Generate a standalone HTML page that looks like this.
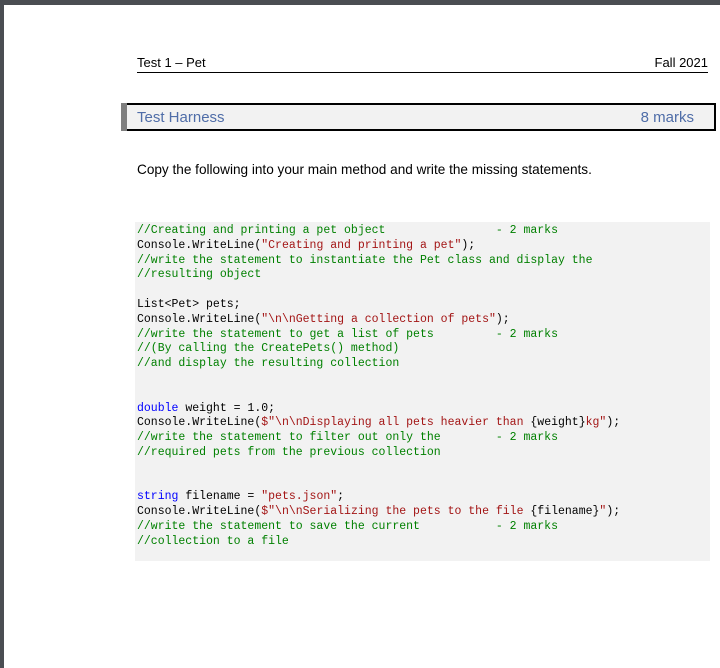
<!DOCTYPE html>
<html><head><meta charset="utf-8"><style>
body{margin:0;width:720px;height:668px;background:#fff;position:relative;overflow:hidden;font-family:"Liberation Sans",sans-serif;}
.tb{position:absolute;left:0;top:0;width:720px;height:5px;background:#4a4d52}
.lb{position:absolute;left:0;top:0;width:4px;height:668px;background:#4a4d52}
.hdr{position:absolute;left:137px;top:55px;width:571px;height:17px;border-bottom:1px solid #000;font-size:13px;color:#000}
.hdr span{position:absolute;top:0}
.box{position:absolute;left:121px;top:103px;width:593px;height:24px;border:2px solid #000;border-left:none;background:#f2f2f2}
.box .g{position:absolute;left:0;top:-2px;width:6px;height:28px;background:#7f7f7f}
.box span{position:absolute;top:4px;font-size:15px;color:#4f6da8}
.p{position:absolute;left:137px;top:162px;font-size:13.6px;color:#000}
.code{position:absolute;left:135px;top:222px;width:575px;height:339px;background:#f2f2f2}
pre{position:absolute;left:137px;top:224px;margin:0;font-family:"Liberation Mono",monospace;font-size:11.5px;line-height:14.8px;color:#000}
.c{color:#008000}.s{color:#a31515}.k{color:#0000ff}
</style></head><body>
<div class="tb"></div><div class="lb"></div>
<div class="hdr"><span style="left:0">Test 1 – Pet</span><span style="right:0">Fall 2021</span></div>
<div class="box"><div class="g"></div><span style="left:16px">Test Harness</span><span style="right:20px">8 marks</span></div>
<div class="p">Copy the following into your main method and write the missing statements.</div>
<div class="code"></div>
<pre><span class="c">//Creating and printing a pet object                - 2 marks</span>
Console.WriteLine(<span class="s">"Creating and printing a pet"</span>);
<span class="c">//write the statement to instantiate the Pet class and display the</span>
<span class="c">//resulting object</span>

List&lt;Pet&gt; pets;
Console.WriteLine(<span class="s">"\n\nGetting a collection of pets"</span>);
<span class="c">//write the statement to get a list of pets         - 2 marks</span>
<span class="c">//(By calling the CreatePets() method)</span>
<span class="c">//and display the resulting collection</span>


<span class="k">double</span> weight = 1.0;
Console.WriteLine(<span class="s">$"\n\nDisplaying all pets heavier than </span>{weight}<span class="s">kg"</span>);
<span class="c">//write the statement to filter out only the        - 2 marks</span>
<span class="c">//required pets from the previous collection</span>


<span class="k">string</span> filename = <span class="s">"pets.json"</span>;
Console.WriteLine(<span class="s">$"\n\nSerializing the pets to the file </span>{filename}<span class="s">"</span>);
<span class="c">//write the statement to save the current           - 2 marks</span>
<span class="c">//collection to a file</span></pre>
</body></html>
